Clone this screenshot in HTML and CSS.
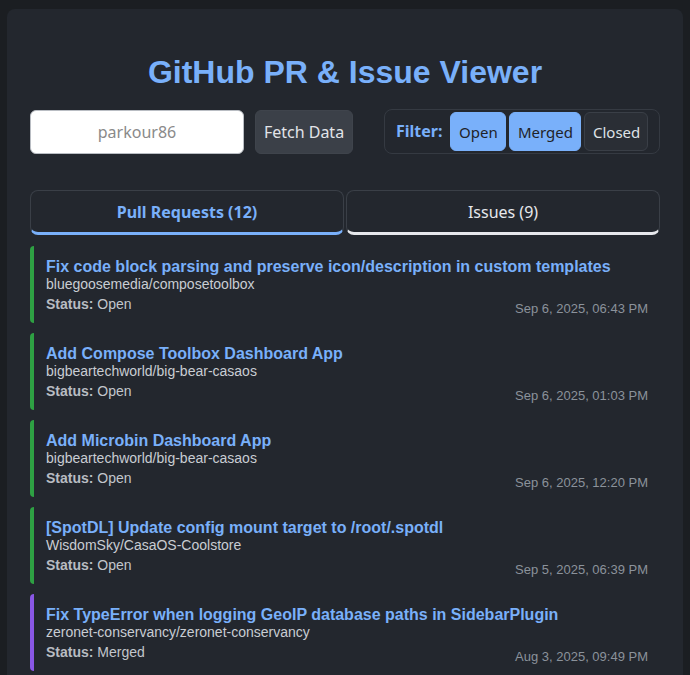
FILE: index.html
```html
<!DOCTYPE html>
<html lang="en">
<head>
<meta charset="utf-8">
<title>GitHub PR &amp; Issue Viewer</title>
<link rel="stylesheet" href="styles.css">
</head>
<body>
<div class="app">
  <h1 class="title">GitHub PR &amp; Issue Viewer</h1>
  <div class="controls">
    <div class="search">
      <input class="user-input" type="text" placeholder="parkour86">
      <button class="fetch-btn">Fetch Data</button>
    </div>
    <div class="filter">
      <span class="filter-label">Filter:</span>
      <button class="filter-btn active">Open</button>
      <button class="filter-btn active">Merged</button>
      <button class="filter-btn">Closed</button>
    </div>
  </div>
  <div class="tabs">
    <button class="tab active">Pull Requests (12)</button>
    <button class="tab">Issues (9)</button>
  </div>
  <div class="list">
    <div class="item open">
      <div class="item-title">Fix code block parsing and preserve icon/description in custom templates</div>
      <div class="item-repo">bluegoosemedia/composetoolbox</div>
      <div class="item-meta"><span class="status"><b>Status:</b> Open</span><span class="date">Sep 6, 2025, 06:43 PM</span></div>
    </div>
    <div class="item open">
      <div class="item-title">Add Compose Toolbox Dashboard App</div>
      <div class="item-repo">bigbeartechworld/big-bear-casaos</div>
      <div class="item-meta"><span class="status"><b>Status:</b> Open</span><span class="date">Sep 6, 2025, 01:03 PM</span></div>
    </div>
    <div class="item open">
      <div class="item-title">Add Microbin Dashboard App</div>
      <div class="item-repo">bigbeartechworld/big-bear-casaos</div>
      <div class="item-meta"><span class="status"><b>Status:</b> Open</span><span class="date">Sep 6, 2025, 12:20 PM</span></div>
    </div>
    <div class="item open">
      <div class="item-title">[SpotDL] Update config mount target to /root/.spotdl</div>
      <div class="item-repo">WisdomSky/CasaOS-Coolstore</div>
      <div class="item-meta"><span class="status"><b>Status:</b> Open</span><span class="date">Sep 5, 2025, 06:39 PM</span></div>
    </div>
    <div class="item merged">
      <div class="item-title">Fix TypeError when logging GeoIP database paths in SidebarPlugin</div>
      <div class="item-repo">zeronet-conservancy/zeronet-conservancy</div>
      <div class="item-meta"><span class="status"><b>Status:</b> Merged</span><span class="date">Aug 3, 2025, 09:49 PM</span></div>
    </div>
  </div>
</div>
</body>
</html>
```
FILE: styles.css
```css
html, body {
  margin: 0;
  background: #1b1e22;
}
body {
  padding: 9px 7px 0;
  font-family: "Liberation Sans", Arial, sans-serif;
  overflow: hidden;
  height: 675px;
  box-sizing: border-box;
}
.app {
  background: #23272e;
  border-radius: 8px;
  padding: 23px 23px 30px;
  min-height: 700px;
}
.title {
  margin: 22px 0 18px;
  text-align: center;
  font-size: 32px;
  font-weight: bold;
  color: #79b0fa;
  line-height: 37px;
}
.controls {
  display: flex;
  justify-content: space-between;
  align-items: center;
}
.search {
  display: flex;
  align-items: center;
  gap: 11px;
}
.user-input {
  width: 214px;
  height: 44px;
  box-sizing: border-box;
  border: 1px solid #b9bdc3;
  border-radius: 6px;
  background: #ffffff;
  text-align: center;
  font-family: "Noto Sans", sans-serif;
  font-size: 16px;
  padding: 0 8px;
  outline: none;
}
.user-input::placeholder {
  color: #8a8a8a;
}
.fetch-btn {
  height: 44px;
  width: 98px;
  box-sizing: border-box;
  border: 1px solid #3f444c;
  border-radius: 6px;
  background: #3b4048;
  color: #e2e4e8;
  font-family: "Noto Sans", sans-serif;
  font-size: 16px;
  padding: 0;
}
.filter {
  display: flex;
  align-items: center;
  gap: 3px;
  border: 1px solid #353a42;
  border-radius: 8px;
  padding: 2px 11px 2px 11px;
  width: 276px;
  height: 45px;
  box-sizing: border-box;
}
.filter-label {
  font-family: "Noto Sans", sans-serif;
  font-weight: bold;
  font-size: 16px;
  color: #79b0fa;
  margin-right: auto;
  margin-top: -2px;
}
.filter-btn {
  height: 39px;
  box-sizing: border-box;
  border: 1px solid #3a3f47;
  border-radius: 6px;
  background: #2a2e35;
  color: #dfe2e6;
  font-family: "Noto Sans", sans-serif;
  font-size: 15px;
  padding: 0 8px;
}
.filter-btn:nth-of-type(1) { width: 56px; }
.filter-btn:nth-of-type(2) { width: 72px; }
.filter-btn:nth-of-type(3) { width: 64px; }
.filter-btn.active {
  background: #79b0fa;
  border-color: #79b0fa;
  color: #1f2328;
}
.tabs {
  display: flex;
  gap: 2px;
  margin-top: 36px;
}
.tab {
  flex: 1;
  height: 45px;
  box-sizing: border-box;
  border: 1px solid #3a3f47;
  border-bottom: 3px solid #e6e8ec;
  border-radius: 8px;
  background: #23272e;
  color: #e6e8ec;
  font-family: "Noto Sans", sans-serif;
  font-size: 16px;
  padding: 0;
}
.tab.active {
  border-bottom-color: #79b0fa;
  color: #79b0fa;
  font-weight: bold;
}
.list {
  margin-top: 11px;
  display: flex;
  flex-direction: column;
  gap: 10px;
}
.item {
  border-left: 4px solid #2ea043;
  border-radius: 4px;
  padding: 12px 12px 7px;
  height: 77px;
  box-sizing: border-box;
}
.item.merged {
  border-left-color: #8957e5;
}
.item-title {
  font-size: 16px;
  font-weight: bold;
  color: #79b0fa;
  line-height: 18px;
}
.item-repo {
  font-size: 14px;
  color: #c9cdd3;
  line-height: 16px;
}
.item-meta {
  display: flex;
  justify-content: space-between;
  align-items: flex-start;
  margin-top: 4px;
}
.status {
  font-size: 14px;
  color: #c2c6cc;
  line-height: 16px;
}
.status b {
  color: #b8bcc2;
}
.date {
  font-size: 13px;
  color: #8b929b;
  line-height: 15px;
  padding-top: 5px;
}
```
